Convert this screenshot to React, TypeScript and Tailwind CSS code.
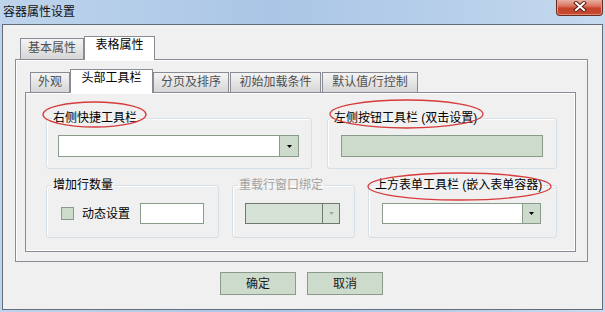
import React from "react";

function Tri({ color = "#000" }: { color?: string }) {
  return (
    <svg width="5" height="3" viewBox="0 0 5 3">
      <polygon points="0,0 5,0 2.5,3" fill={color} />
    </svg>
  );
}

export default function App() {
  return (
    <div className="relative h-[312px] w-[605px] overflow-hidden bg-[linear-gradient(to_right,#bed4ec,#aac6e6_45%,#b7cfea_75%,#c6daef)] [font-family:'Liberation_Sans','Noto_Sans_CJK_SC',sans-serif] text-[12px] leading-[14px] text-black">
      {/* title bar */}
      <div className="flex h-[24px] items-start justify-between">
        <div className="pl-[3px] pt-[5px] text-[12px] leading-[14px] text-[#101010]">容器属性设置</div>
        <div className="mr-[2px] flex h-[16px] w-[47px] items-center justify-center rounded-b-[4px] border border-t-0 border-[#6a2a20] bg-[linear-gradient(#e9b0a2,#d9745f_40%,#c8432b_55%,#c44a33)] shadow-[inset_0_-1px_0_#e08a74,inset_1px_0_0_#e49a88,inset_-1px_0_0_#e49a88]">
          <svg width="14" height="11" viewBox="0 0 14 11" className="-mt-[2px]">
            <path d="M3 2 L11 9 M11 2 L3 9" stroke="#5a1f17" strokeWidth="4" strokeLinecap="square" />
            <path d="M3 2 L11 9 M11 2 L3 9" stroke="#ffffff" strokeWidth="2" strokeLinecap="square" />
          </svg>
        </div>
      </div>

      {/* client area */}
      <div className="ml-[2px] flex h-[286px] w-[601px] flex-col border border-[#646c7a] bg-[#f0f0f0]">
        {/* outer tab control */}
        <div className="ml-[12px] mt-[11px] flex w-[573px] flex-col">
          <div className="flex h-[23px] items-end pl-[5px]">
            <div className="flex h-[21px] w-[64px] justify-center border border-b-0 border-[#898c95] bg-[linear-gradient(#f4f4f4,#d6d6d6)] pt-[2px] text-[#505050]">基本属性</div>
            <div className="relative z-10 -mb-px flex h-[24px] w-[71px] justify-center border border-b-0 border-[#898c95] bg-white pt-[1px]">表格属性</div>
          </div>
          <div className="h-[203px] border border-[#898c95] bg-[#f0f0f0] shadow-[inset_1px_1px_0_#fff]">
            {/* inner tab control */}
            <div className="ml-[9px] mt-[9px] flex w-[551px] flex-col">
              <div className="flex h-[23px] items-end pl-[5px]">
                <div className="flex h-[20px] w-[40px] justify-center border border-b-0 border-[#898c95] bg-[linear-gradient(#f4f4f4,#d6d6d6)] pt-[2px] text-[#505050]">外观</div>
                <div className="relative z-10 -mb-px flex h-[24px] w-[83px] justify-center border border-b-0 border-[#898c95] bg-white pt-[1px]">头部工具栏</div>
                <div className="flex h-[20px] w-[76px] justify-center border border-b-0 border-[#898c95] bg-[linear-gradient(#f4f4f4,#d6d6d6)] pt-[2px] text-[#505050]">分页及排序</div>
                <div className="ml-[1px] flex h-[20px] w-[91px] justify-center border border-b-0 border-[#898c95] bg-[linear-gradient(#f4f4f4,#d6d6d6)] pt-[2px] text-[#505050]">初始加载条件</div>
                <div className="ml-[1px] flex h-[20px] w-[96px] justify-center border border-b-0 border-[#898c95] bg-[linear-gradient(#f4f4f4,#d6d6d6)] pt-[2px] text-[#505050]">默认值/行控制</div>
              </div>
              <div className="h-[160px] border border-[#898c95] bg-[#f0f0f0] shadow-[inset_0_1px_0_#fff,inset_-1px_-1px_0_#fff]">
                {/* row 1 */}
                <div className="ml-[20px] mt-[18px] flex gap-[15px]">
                  <fieldset className="h-[58px] w-[266px] rounded-[3px] border border-[#d5dfe5] shadow-[inset_1px_1px_0_#fff]">
                    <legend className="ml-[5px] px-[1px] leading-[14px]">右侧快捷工具栏</legend>
                    <div className="pl-[11px] pt-[10px]">
                      <div className="flex h-[22px] w-[241px] border border-[#8b9b8b] bg-white">
                        <div className="flex-1" />
                        <div className="flex w-[19px] items-center justify-center border-l border-[#8b9b8b] bg-[#cddbcd]">
                          <Tri />
                        </div>
                      </div>
                    </div>
                  </fieldset>
                  <fieldset className="h-[58px] w-[230px] rounded-[3px] border border-[#d5dfe5] shadow-[inset_1px_1px_0_#fff]">
                    <legend className="ml-[5px] px-[1px] leading-[14px]">左侧按钮工具栏 (双击设置)</legend>
                    <div className="pl-[13px] pt-[10px]">
                      <div className="h-[22px] w-[202px] border border-[#8b9b8b] bg-[#cddbcd]" />
                    </div>
                  </fieldset>
                </div>
                {/* row 2 */}
                <div className="ml-[20px] mt-[9px] flex gap-[13px]">
                  <fieldset className="h-[60px] w-[173px] rounded-[3px] border border-[#d5dfe5] shadow-[inset_1px_1px_0_#fff]">
                    <legend className="ml-[5px] px-[1px] leading-[14px]">增加行数量</legend>
                    <div className="flex h-[32px] items-center pl-[14px] pt-[11px]">
                      <div className="h-[13px] w-[13px] border border-[#8b9b8b] bg-[#cddbcd]" />
                      <span className="ml-[8px] leading-[14px]">动态设置</span>
                      <div className="ml-[10px] h-[21px] w-[64px] border border-[#8b9b8b] bg-white" />
                    </div>
                  </fieldset>
                  <fieldset className="h-[60px] w-[123px] rounded-[3px] border border-[#d5dfe5] shadow-[inset_1px_1px_0_#fff]">
                    <legend className="ml-[5px] px-[1px] leading-[14px] text-[#a3a3a3]">重载行窗口绑定</legend>
                    <div className="pl-[12px] pt-[11px]">
                      <div className="flex h-[21px] w-[95px] border border-[#6f786f] bg-[#d7e2d7]">
                        <div className="flex-1" />
                        <div className="flex w-[17px] items-center justify-center border-l border-[#6f786f]">
                          <Tri color="#a8a8a8" />
                        </div>
                      </div>
                    </div>
                  </fieldset>
                  <fieldset className="h-[60px] w-[189px] rounded-[3px] border border-[#d5dfe5] shadow-[inset_1px_1px_0_#fff]">
                    <legend className="ml-[5px] px-[1px] leading-[14px]">上方表单工具栏 (嵌入表单容器)</legend>
                    <div className="pl-[13px] pt-[11px]">
                      <div className="flex h-[21px] w-[159px] border border-[#8b9b8b] bg-white">
                        <div className="flex-1" />
                        <div className="flex w-[18px] items-center justify-center border-l border-[#8b9b8b] bg-[#cddbcd]">
                          <Tri />
                        </div>
                      </div>
                    </div>
                  </fieldset>
                </div>
              </div>
            </div>
          </div>
        </div>

        {/* buttons */}
        <div className="mt-[10px] flex gap-[11px] pl-[217px]">
          <div className="flex h-[23px] w-[76px] items-center justify-center border border-[#8b9b8b] bg-[#cddbcd] text-[#1a1a1a]">确定</div>
          <div className="flex h-[23px] w-[76px] items-center justify-center border border-[#8b9b8b] bg-[#cddbcd] text-[#1a1a1a]">取消</div>
        </div>
      </div>

      {/* red annotation ellipses */}
      <svg className="pointer-events-none absolute left-0 top-0" width="605" height="312" viewBox="0 0 605 312">
        <ellipse cx="94.5" cy="114.5" rx="51.5" ry="12.5" fill="none" stroke="#d63a3a" strokeWidth="1.3" />
        <ellipse cx="406.5" cy="114" rx="76.5" ry="14" fill="none" stroke="#d63a3a" strokeWidth="1.3" />
        <ellipse cx="459.5" cy="186.5" rx="91.5" ry="13.5" fill="none" stroke="#d63a3a" strokeWidth="1.3" />
      </svg>
    </div>
  );
}
